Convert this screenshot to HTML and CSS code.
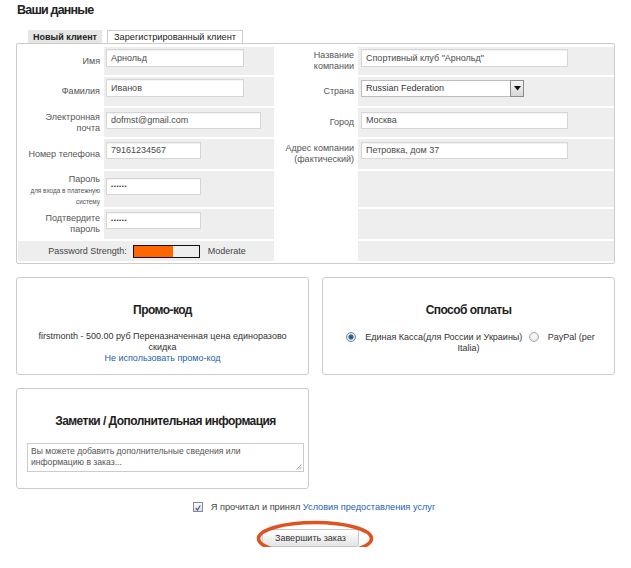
FILE: index.html
```html
<!DOCTYPE html>
<html lang="ru">
<head>
<meta charset="utf-8">
<title>Ваши данные</title>
<link rel="stylesheet" href="styles.css">
</head>
<body>
<div class="page">
  <h1 class="title">Ваши данные</h1>
  <div class="tabs">
    <span class="tab tab-active">Новый клиент</span>
    <span class="tab tab-other">Зарегистрированный клиент</span>
  </div>
  <div class="panel">
    <div class="grid">
      <div class="lbl">Имя</div>
      <div class="fld"><div class="inp w138">Арнольд</div></div>
      <div class="lbl">Название<br>компании</div>
      <div class="fld fld-r"><div class="inp w207">Спортивный клуб "Арнольд"</div></div>

      <div class="lbl">Фамилия</div>
      <div class="fld"><div class="inp w138">Иванов</div></div>
      <div class="lbl">Страна</div>
      <div class="fld fld-r pt3">
        <div class="select">
          <span class="select-text">Russian Federation</span>
          <span class="select-btn"><svg width="7" height="5" viewBox="0 0 7 5"><path d="M0 0h7L3.5 4.5z" fill="#111"/></svg></span>
        </div>
      </div>

      <div class="lbl">Электронная<br>почта</div>
      <div class="fld pt4"><div class="inp w155 h17">dofmst@gmail.com</div></div>
      <div class="lbl">Город</div>
      <div class="fld fld-r pt4"><div class="inp w207 h17">Москва</div></div>

      <div class="lbl">Номер телефона</div>
      <div class="fld pt3"><div class="inp w95 h17">79161234567</div></div>
      <div class="lbl">Адрес компании<br>(фактический)</div>
      <div class="fld fld-r pt3"><div class="inp w207 h17">Петровка, дом 37</div></div>

      <div class="lbl lbl-pass">Пароль<br><small>для входа в платежную<br>систему</small></div>
      <div class="fld pt7"><div class="inp w95 h17 dots">••••••</div></div>
      <div class="lbl"></div>
      <div class="fld fld-r"></div>

      <div class="lbl">Подтвердите<br>пароль</div>
      <div class="fld pt3"><div class="inp w95 h17 dots">••••••</div></div>
      <div class="lbl"></div>
      <div class="fld fld-r"></div>

      <div class="strength">
        <span>Password Strength:</span>
        <span class="meter"><span class="meter-fill" style="width: 60%"></span></span>
        <span>Moderate</span>
      </div>
      <div class="lbl"></div>
      <div class="fld fld-r"></div>
    </div>
  </div>

  <div class="boxes">
    <div class="box">
      <h2 class="box-title">Промо-код</h2>
      <p class="box-text">firstmonth - 500.00 руб Переназначенная цена единоразово<br>скидка<br><a class="link" href="#">Не использовать промо-код</a></p>
    </div>
    <div class="box">
      <h2 class="box-title">Способ оплаты</h2>
      <p class="box-text pay-text"><span class="radio radio-on"></span>Единая Касса(для России и Украины) <span class="radio"></span>PayPal (per<br>Italia)</p>
    </div>
  </div>

  <div class="box notes">
    <h2 class="box-title">Заметки / Дополнительная информация</h2>
    <div class="textarea">Вы можете добавить дополнительные сведения или<br>информацию в заказ...
      <svg class="grip" width="6" height="6" viewBox="0 0 6 6"><path d="M5.5 0.5L0.5 5.5M5.5 3L3 5.5" stroke="#888" stroke-width="0.8"/></svg>
    </div>
  </div>

  <div class="agree">
    <span class="check"><svg width="10" height="10" viewBox="0 0 10 10"><path d="M2.3 5.2L4.2 7.6L7.9 1.8" fill="none" stroke="#2c4f9e" stroke-width="1.3"/></svg></span>
    <span>Я прочитал и принял <a class="link" href="#">Условия предоставления услуг</a></span>
  </div>

  <div class="submit">
    <span class="btn">Завершить заказ</span>
    <svg class="ring" width="118" height="37" viewBox="0 0 118 37"><ellipse cx="59" cy="18.5" rx="56.5" ry="16" fill="none" stroke="#de5420" stroke-width="3.6"/></svg>
  </div>
</div>
</body>
</html>
```

FILE: styles.css
```css
* { box-sizing: border-box; }
html, body { margin: 0; padding: 0; background: #fff; }
body { font-family: "Liberation Sans", Arial, sans-serif; color: #333; }

.page { width: 631px; padding: 0 16px; }

.title {
  margin: 0;
  padding: 3px 0 0 1px;
  font-size: 12.5px;
  line-height: 14px;
  font-weight: bold;
  letter-spacing: -0.8px;
  color: #222;
}

.tabs {
  display: flex;
  gap: 5px;
  margin-top: 13px;
  padding-left: 12px;
  height: 13px;
}
.tab {
  display: flex;
  align-items: center;
  justify-content: center;
  height: 13px;
  font-size: 9px;
  color: #222;
}
.tab-active { width: 74px; background: #e6e6e6; font-weight: bold; }
.tab-other { width: 136px; border: 1px solid #ccc; border-bottom: none; background: #fff; font-size: 9.2px; }

.panel {
  border: 1px solid #ccc;
  border-radius: 2px;
  padding: 3px 0 2px 1px;
}
.grid {
  display: grid;
  grid-template-columns: 84px 170px 80px 256px;
  grid-template-rows: 28px 29px 29px 30px 36px 30px 20px;
  gap: 2px;
}
.lbl {
  display: flex;
  flex-direction: column;
  justify-content: center;
  align-items: flex-end;
  text-align: right;
  padding-right: 2px;
  font-size: 9px;
  line-height: 11px;
  color: #555;
}
.lbl small { font-size: 6.4px; line-height: 11px; }
.lbl-pass { padding-top: 2px; }
.fld { background: #eee; padding: 2px 0 0 2px; }
.fld-r { padding-left: 3px; }
.pt3 { padding-top: 3px; }
.pt4 { padding-top: 4px; }
.pt7 { padding-top: 7px; }

.inp {
  height: 18px;
  background: #fff;
  border: 1px solid #d6d6d6;
  box-shadow: inset 0 1px 1px rgba(0,0,0,0.05);
  font-size: 9px;
  line-height: 16px;
  padding-left: 4px;
  color: #4a4a4a;
  white-space: nowrap;
}
.h17 { height: 17px; line-height: 15px; }
.w138 { width: 138px; }
.w155 { width: 155px; }
.w95 { width: 95px; }
.w207 { width: 207px; }
.dots { font-size: 6px; letter-spacing: 0.6px; color: #333; }

.select {
  display: flex;
  width: 163px;
  height: 17px;
  background: #fff;
  border: 1px solid #bdbdbd;
}
.select-text { flex: 1; font-size: 9px; line-height: 15px; padding-left: 4px; color: #333; }
.select-btn {
  width: 14px;
  height: 17px;
  margin: -1px -1px 0 0;
  border: 1px solid #8c8c8c;
  background: linear-gradient(#f4f4f4, #d8d8d8);
  display: flex;
  align-items: center;
  justify-content: center;
}

.strength {
  grid-column: 1 / 3;
  background: #eee;
  display: flex;
  align-items: center;
  justify-content: center;
  gap: 6px;
  font-size: 9px;
  color: #444;
  padding-left: 2px;
}
.meter {
  width: 67px;
  height: 13px;
  border: 1px solid #111;
  background: #eee;
  margin-right: 2px;
  display: flex;
}
.meter-fill { background: #ff6600; height: 100%; }

.boxes {
  display: grid;
  grid-template-columns: 293px 293px;
  gap: 13px;
  margin-top: 13px;
}
.box {
  border: 1px solid #ccc;
  border-radius: 3px;
  padding: 25px 10px 0;
  text-align: center;
  height: 98px;
}
.box-title {
  margin: 0;
  font-size: 12px;
  line-height: 14px;
  font-weight: bold;
  letter-spacing: -0.55px;
  color: #222;
}
.box-text {
  margin: 14px 0 0;
  font-size: 9px;
  line-height: 11px;
  color: #333;
}
.link { color: #1d5fae; text-decoration: none; }
.pay-text { margin-top: 15px; }
.radio {
  display: inline-block;
  width: 10px;
  height: 10px;
  border-radius: 50%;
  border: 1px solid #a8a8a8;
  background: radial-gradient(circle at 50% 40%, #fff, #ddd);
  vertical-align: -2px;
  margin: 0 9px 0 4px;
}
.radio-on { background: radial-gradient(circle, #1d4f7c 0, #2a7ab8 2.2px, #e9e9e9 3px, #cfcfcf 5px); border-color: #8a8a8a; }

.notes {
  width: 293px;
  height: 101px;
  margin-top: 13px;
  padding: 25px 4px 0 10px;
}
.textarea {
  position: relative;
  margin-top: 15px;
  height: 29px;
  border: 1px solid #ccc;
  text-align: left;
  font-size: 8.6px;
  line-height: 11px;
  padding: 2px 3px;
  color: #555;
}
.grip { position: absolute; right: 1px; bottom: 1px; }

.agree {
  display: flex;
  justify-content: center;
  align-items: center;
  gap: 8px;
  margin-top: 13px;
  font-size: 9.2px;
  color: #444;
  padding-right: 3px;
}
.check {
  width: 10px;
  height: 10px;
  border: 1px solid #8a8a8a;
  background: linear-gradient(#fff, #dcdcdc);
  display: flex;
}

.submit {
  position: relative;
  display: flex;
  justify-content: center;
  margin-top: 17px;
  padding-right: 10px;
}
.btn {
  width: 97px;
  height: 18px;
  border: 1px solid #c6c6c6;
  border-radius: 3px;
  background: linear-gradient(#ffffff, #e4e4e4);
  font-size: 9px;
  line-height: 16px;
  text-align: center;
  color: #333;
}
.ring { position: absolute; left: 240px; top: -9px; }
```
